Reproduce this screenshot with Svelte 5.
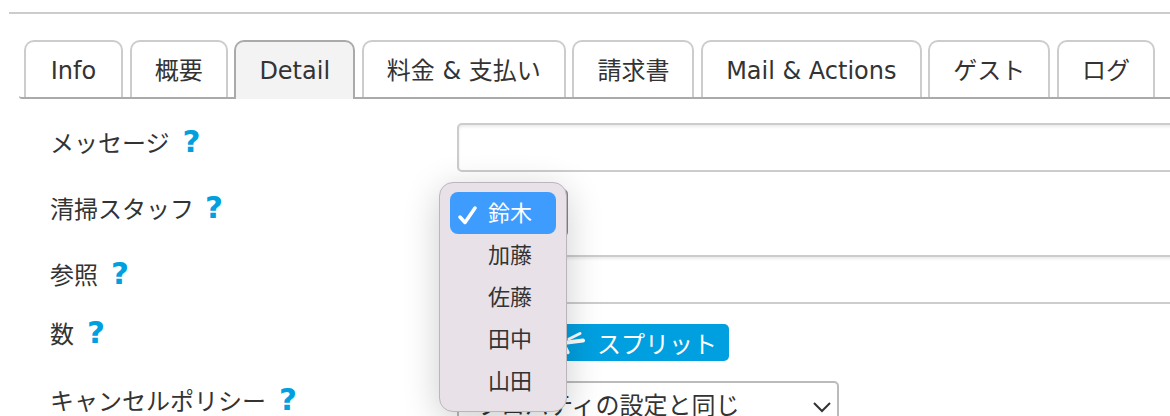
<script>
	const tabs = [
		{ label: 'Info' },
		{ label: '概要' },
		{ label: 'Detail', active: true },
		{ label: '料金 & 支払い' },
		{ label: '請求書' },
		{ label: 'Mail & Actions' },
		{ label: 'ゲスト' },
		{ label: 'ログ' }
	];

	const staff = ['鈴木', '加藤', '佐藤', '田中', '山田'];
</script>

<div class="page">
	<hr class="rule" />

	<nav class="tabs">
		{#each tabs as tab}
			<div class="tab" class:active={tab.active}>{tab.label}</div>
		{/each}
	</nav>

	<form class="form">
		<div class="row message-row">
			<div class="label">メッセージ<span class="help">?</span></div>
			<input class="input" type="text" />
		</div>
		<div class="row">
			<div class="label">清掃スタッフ<span class="help staff-help">?</span></div>
			<div class="select staff-select">鈴木</div>
		</div>
		<div class="row">
			<div class="label">参照<span class="help">?</span></div>
			<input class="input" type="text" />
		</div>
		<div class="row count-row">
			<div class="label">数<span class="help">?</span></div>
			<div class="badge">
				<svg class="split" width="34" height="24" viewBox="0 0 34 24" fill="none" stroke="#fff" stroke-linecap="round">
					<path d="M8 15 L16 11.5 L32 9.5" stroke-width="4" />
					<path d="M18 8 L29 2.5" stroke-width="3" />
					<path d="M14 15.5 L17 21.5" stroke-width="3.4" />
				</svg>
				<span>スプリット</span>
			</div>
		</div>
		<div class="row">
			<div class="label">キャンセルポリシー<span class="help">?</span></div>
			<div class="select policy-select">
				プロパティの設定と同じ
				<svg class="chevron" width="20" height="12" viewBox="0 0 20 12" fill="none" stroke="#333" stroke-width="2">
					<path d="M2 2 L10 10 L18 2" />
				</svg>
			</div>
		</div>
	</form>

	<ul class="popup">
		{#each staff as name, i}
			<li class="option" class:selected={i === 0}>
				{#if i === 0}
					<svg class="check" width="20" height="19" viewBox="0 0 20 19" fill="none" stroke="#fff" stroke-width="3.5" stroke-linecap="round" stroke-linejoin="round">
						<path d="M2 11 L7 16.5 L17 2" />
					</svg>
				{/if}
				{name}
			</li>
		{/each}
	</ul>
</div>

<style>
	:global(body) {
		margin: 0;
		background: #fff;
		overflow: hidden;
	}

	.page {
		position: relative;
		width: 1170px;
		height: 416px;
		overflow: hidden;
		padding-top: 12px;
		box-sizing: border-box;
		font-family: 'DejaVu Sans', 'Noto Sans CJK JP', sans-serif;
		font-size: 24px;
		color: #333;
	}

	.rule {
		margin: 0 0 26px 9px;
		border: 0;
		height: 2px;
		background: #ccc;
	}

	.tabs {
		display: flex;
		gap: 6.7px;
		height: 57px;
		margin-left: 19px;
		padding-left: 5px;
		border-bottom: 2px solid #aaa;
		border-bottom-left-radius: 3px;
	}

	.tab {
		height: 57px;
		box-sizing: border-box;
		padding: 0 23px;
		border: 2px solid #ccc;
		border-bottom: 0;
		border-radius: 10px 10px 0 0;
		line-height: 58px;
		text-align: center;
		white-space: nowrap;
		background: #fff;
	}

	.tab:first-child {
		width: 99px;
	}

	.tab.active {
		height: 59px;
		border-color: #aaa;
		background: #f3f3f3;
	}

	.form {
		display: flex;
		flex-direction: column;
		gap: 18px;
		padding: 24px 0 0 50px;
	}

	.row {
		display: flex;
		align-items: flex-start;
	}

	.message-row {
		margin-bottom: -1px;
	}

	.label {
		flex: none;
		width: 407px;
		height: 36px;
		line-height: 36px;
		white-space: nowrap;
	}

	.count-row {
		margin-top: 2px;
		margin-bottom: 2px;
	}

	.count-row .label {
		margin-top: -10px;
	}

	.help {
		margin-left: 13px;
		font-size: 31px;
		font-weight: 700;
		color: #00a0e0;
	}

	.staff-help {
		margin-left: 11px;
	}

	.input {
		flex: none;
		width: 760px;
		height: 49px;
		box-sizing: border-box;
		border: 2px solid #ccc;
		border-radius: 5px;
		background: #fff;
		box-shadow: inset 0 2px 3px rgba(0, 0, 0, 0.08);
	}

	.select {
		display: flex;
		align-items: center;
		box-sizing: border-box;
		height: 48px;
		border: 2px solid #bbb;
		border-radius: 5px;
		padding-left: 16px;
		background: #fff;
		white-space: nowrap;
	}

	.staff-select {
		width: 111px;
		border-color: #888;
	}

	.policy-select {
		width: 382px;
		padding-left: 18px;
		padding-bottom: 4px;
		position: relative;
	}

	.chevron {
		position: absolute;
		left: 353px;
		top: 18px;
	}

	.badge {
		display: flex;
		align-items: center;
		width: 272px;
		height: 37px;
		box-sizing: border-box;
		padding-left: 94px;
		border-radius: 5px;
		background: #00a0e0;
		color: #fff;
		white-space: nowrap;
	}

	.split {
		flex: none;
		margin-right: 12px;
	}

	.popup {
		position: absolute;
		left: 439px;
		top: 182px;
		width: 128px;
		height: 230px;
		box-sizing: border-box;
		margin: 0;
		padding: 9px 10px;
		list-style: none;
		border: 1px solid #bbb6bb;
		border-radius: 14px;
		background: #e8e2e8;
		box-shadow: 0 8px 36px rgba(0, 0, 0, 0.2);
		font-size: 22px;
	}

	.option {
		position: relative;
		height: 42px;
		line-height: 44px;
		padding-left: 38px;
		border-radius: 8px;
		white-space: nowrap;
	}

	.option.selected {
		background: #3d9cfd;
		color: #fff;
	}

	.check {
		position: absolute;
		left: 8px;
		top: 14px;
	}
</style>
